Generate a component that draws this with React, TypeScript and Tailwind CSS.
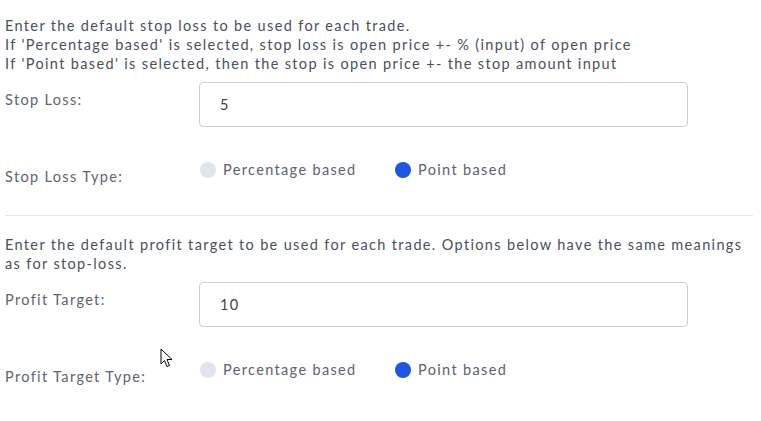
import React from "react";

function Radio({ checked, label, wide }: { checked: boolean; label: string; wide?: boolean }) {
  return (
    <div className={`flex h-[19px] items-center ${wide ? "w-[195px]" : ""}`}>
      <span
        className={`h-[16px] w-[16px] shrink-0 rounded-full ${checked ? "bg-[#1b55e2]" : "bg-[#dfe4ec]"}`}
      />
      <span className="ml-[7px] text-[#5d6170]">{label}</span>
    </div>
  );
}

function InputRow({ label, value }: { label: string; value: string }) {
  return (
    <div className="mt-[9px] flex">
      <div className="w-[194px] shrink-0 pt-[8px] text-[#5e6372]">{label}</div>
      <div className="flex h-[45px] w-[489px] items-center rounded-[4px] border border-[#c9ced8] pl-[20px] text-[#3f4452]">
        {value}
      </div>
    </div>
  );
}

function RadioRow({ label }: { label: string }) {
  return (
    <div className="mt-[23px] flex items-start">
      <div className="w-[194px] shrink-0 pt-[17px] text-[#5e6372]">{label}</div>
      <div className="flex pl-[1px] pt-[10px]">
        <Radio checked={false} label="Percentage based" wide />
        <Radio checked={true} label="Point based" />
      </div>
    </div>
  );
}

function Cursor() {
  return (
    <svg className="absolute left-[160px] top-[348px]" width="14" height="20" viewBox="0 0 14 20">
      <path
        d="M1 1 L1 16 L4.5 12.5 L7 18.5 L9.5 17.5 L7 11.5 L12 11.5 Z"
        fill="white"
        stroke="black"
        strokeWidth="1"
        strokeLinejoin="round"
      />
    </svg>
  );
}

export default function App() {
  return (
    <div className="relative h-[421px] w-[761px] bg-white font-['Lato',sans-serif] text-[14.5px] leading-[19px] tracking-[1.35px] text-[#4a4f5e]">
      <div className="w-[753px] pl-[5px] pt-[16px]">
        <p>
          Enter the default stop loss to be used for each trade.
          <br />
          If 'Percentage based' is selected, stop loss is open price +- % (input) of open price
          <br />
          If 'Point based' is selected, then the stop is open price +- the stop amount input
        </p>
        <InputRow label="Stop Loss:" value="5" />
        <RadioRow label="Stop Loss Type:" />
        <div className="mt-[29px] border-t border-[#e3e6ec]" />
        <p className="pt-[19px]">
          Enter the default profit target to be used for each trade. Options below have the same meanings as for stop-loss.
        </p>
        <InputRow label="Profit Target:" value="10" />
        <RadioRow label="Profit Target Type:" />
      </div>
      <Cursor />
    </div>
  );
}
